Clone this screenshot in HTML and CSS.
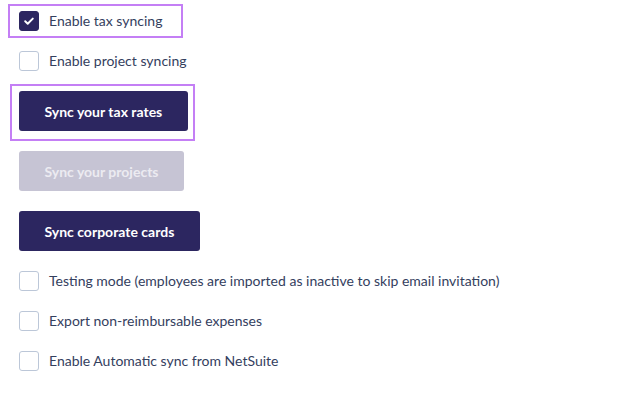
FILE: index.html
```html
<!DOCTYPE html>
<html>
<head>
<meta charset="utf-8">
<link rel="stylesheet" href="styles.css">
</head>
<body>
<div class="settings">
  <label class="check-row highlight-row">
    <span class="box checked">
      <svg viewBox="0 0 20 20" width="20" height="20"><path d="M6.2 10.3 L8.7 12.7 L13.8 7.6" fill="none" stroke="#fff" stroke-width="2" stroke-linecap="round" stroke-linejoin="round"/></svg>
    </span>
    <span class="label">Enable tax syncing</span>
  </label>
  <label class="check-row">
    <span class="box"></span>
    <span class="label">Enable project syncing</span>
  </label>
  <div class="btn-wrap highlight-btn"><button class="btn">Sync your tax rates</button></div>
  <div class="btn-wrap"><button class="btn disabled">Sync your projects</button></div>
  <div class="btn-wrap"><button class="btn">Sync corporate cards</button></div>
  <label class="check-row">
    <span class="box"></span>
    <span class="label">Testing mode (employees are imported as inactive to skip email invitation)</span>
  </label>
  <label class="check-row">
    <span class="box"></span>
    <span class="label">Export non-reimbursable expenses</span>
  </label>
  <label class="check-row">
    <span class="box"></span>
    <span class="label">Enable Automatic sync from NetSuite</span>
  </label>
</div>
</body>
</html>
```
FILE: styles.css
```css
html, body {
  margin: 0;
  padding: 0;
  background: #ffffff;
}
body {
  font-family: Lato, "Open Sans", sans-serif;
  color: #34405e;
}
.settings {
  display: flex;
  flex-direction: column;
  align-items: flex-start;
  gap: 20px;
  padding: 11px 0 0 19px;
}
.check-row {
  position: relative;
  display: inline-flex;
  align-items: center;
  height: 20px;
  gap: 10px;
}
.box {
  box-sizing: border-box;
  width: 20px;
  height: 20px;
  border: 1px solid #bcc7d8;
  border-radius: 3px;
  background: #fff;
  display: flex;
}
.box.checked {
  background: #2c2660;
  border-color: #2c2660;
}
.box svg {
  margin: -1px;
}
.label {
  font-size: 14px;
  line-height: 20px;
  white-space: nowrap;
}
.highlight-row::after {
  content: "";
  position: absolute;
  top: -7px;
  bottom: -7px;
  left: -11px;
  right: -21px;
  border: 2px solid #c47ff5;
  pointer-events: none;
}
.btn-wrap {
  position: relative;
  display: inline-flex;
}
.highlight-btn::after {
  content: "";
  position: absolute;
  top: -7px;
  bottom: -10px;
  left: -9px;
  right: -7px;
  border: 2px solid #c47ff5;
  pointer-events: none;
}
.btn {
  height: 40px;
  padding: 0 25.5px;
  border: none;
  border-radius: 3px;
  background: #2c2660;
  color: #ffffff;
  font-family: Lato, "Open Sans", sans-serif;
  font-weight: 700;
  font-size: 14px;
  cursor: pointer;
}
.btn.disabled {
  background: #c6c4d4;
  color: #ecebf1;
}
```
